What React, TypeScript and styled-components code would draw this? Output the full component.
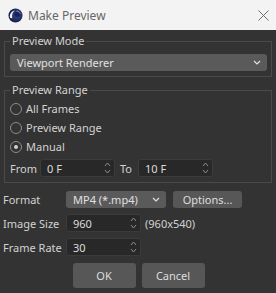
import React from "react"
import styled, { createGlobalStyle } from "styled-components"

const GlobalStyle = createGlobalStyle`
  html, body {
    margin: 0;
    padding: 0;
    background: #333333;
  }
  * {
    box-sizing: border-box;
  }
`

const Window = styled.div`
  width: 276px;
  height: 293px;
  display: flex;
  flex-direction: column;
  background: #333333;
  font-family: "Noto Sans", "Open Sans", sans-serif;
  font-size: 11px;
  color: #d2d2d2;
  overflow: hidden;
`

const TitleBar = styled.div`
  height: 30px;
  flex: none;
  display: flex;
  align-items: center;
  padding: 0 7px 0 8px;
  background: #f3f3f3;
`

const Title = styled.span`
  margin-left: 5px;
  font-size: 12px;
  color: #666666;
`

const Close = styled.span`
  margin-left: auto;
  display: flex;
`

const Body = styled.div`
  display: flex;
  flex-direction: column;
  padding: 0 4px 0 3px;
`

const Group = styled.fieldset<{ $top: number; $pad: number }>`
  margin: ${(p) => p.$top}px 0 0 1px;
  padding: ${(p) => p.$pad}px 4px 5px 5px;
  border: 1px solid #4a4a4a;
  min-width: 0;
`

const Legend = styled.legend`
  padding: 0 2px;
  line-height: 14px;
  color: #d2d2d2;
`

const Select = styled.div<{ $width?: number }>`
  height: 17px;
  width: ${(p) => (p.$width ? `${p.$width}px` : "100%")};
  display: flex;
  align-items: center;
  padding: 0 6px 0 7px;
  background: #5a5a5a;
  border-radius: 3px;
  color: #e0e0e0;
  span {
    flex: 1;
  }
`

const RadioRow = styled.div`
  height: 19px;
  display: flex;
  align-items: center;
  gap: 4px;
`

const RadioCircle = styled.span<{ $on?: boolean }>`
  width: 12px;
  height: 12px;
  border-radius: 50%;
  border: 1px solid #8c8c8c;
  display: flex;
  align-items: center;
  justify-content: center;
  &::after {
    content: "";
    width: 4px;
    height: 4px;
    border-radius: 50%;
    background: ${(p) => (p.$on ? "#d0d0d0" : "transparent")};
  }
`

const RangeRow = styled.div`
  margin-top: 3px;
  height: 18px;
  display: flex;
  align-items: center;
`

const RangeLabel = styled.span<{ $w: number; $pad: number }>`
  width: ${(p) => p.$w}px;
  padding-left: ${(p) => p.$pad}px;
`

const Input = styled.div<{ $width: number }>`
  width: ${(p) => p.$width}px;
  height: 18px;
  display: flex;
  align-items: center;
  padding: 0 3px 0 6px;
  background: #282828;
  border: 1px solid #3b3b3b;
  border-radius: 3px;
  color: #dcdcdc;
  span {
    flex: 1;
  }
`

const Form = styled.div`
  margin-top: 7px;
  display: grid;
  grid-template-columns: 63px auto;
  grid-auto-rows: 18px;
  row-gap: 6px;
  align-items: center;
`

const FieldLine = styled.div`
  display: flex;
  align-items: center;
  gap: 7px;
`

const Note = styled.span`
  margin-left: -3px;
`

const Button = styled.div<{ $width: number; $height: number }>`
  width: ${(p) => p.$width}px;
  height: ${(p) => p.$height}px;
  display: flex;
  align-items: center;
  justify-content: center;
  background: #575757;
  border-radius: 3px;
  color: #dedede;
`

const Buttons = styled.div`
  margin-top: 7px;
  display: flex;
  justify-content: center;
  gap: 6px;
  padding-left: 2px;
`

const Logo = () => (
  <svg width="15" height="15" viewBox="0 0 16 16">
    <defs>
      <radialGradient id="sph" cx="0.6" cy="0.45" r="0.6">
        <stop offset="0" stopColor="#3b4d9a" />
        <stop offset="1" stopColor="#141a3c" />
      </radialGradient>
    </defs>
    <circle cx="8" cy="8" r="7.5" fill="url(#sph)" />
    <path d="M2.2 10.5 C1.2 6.5 4 3 7.5 2.6 C5 4.2 3.8 7 4.6 10.8 C3.8 11 3 10.9 2.2 10.5 Z" fill="#eef1ff" />
    <ellipse cx="9.8" cy="6.8" rx="3" ry="2.6" fill="#1a2250" />
    <path d="M9 3.2 C11 3.2 12.6 4.4 13 6" stroke="#8ea2ee" strokeWidth="1" fill="none" />
  </svg>
)

const CloseIcon = () => (
  <svg width="11" height="11" viewBox="0 0 11 11">
    <path d="M0.5 0.5 L10.5 10.5 M10.5 0.5 L0.5 10.5" stroke="#6e6e6e" strokeWidth="1" />
  </svg>
)

const Chevron = () => (
  <svg width="8" height="5" viewBox="0 0 8 5">
    <path d="M1 1 L4 4 L7 1" stroke="#e0e0e0" strokeWidth="1.2" fill="none" />
  </svg>
)

const Spin = () => (
  <svg width="7" height="14" viewBox="0 0 7 14">
    <path d="M1 5 L3.5 2 L6 5 M1 9 L3.5 12 L6 9" stroke="#8e8e8e" strokeWidth="1" fill="none" />
  </svg>
)

const Radio = ({ label, on }: { label: string; on?: boolean }) => (
  <RadioRow>
    <RadioCircle $on={on} />
    {label}
  </RadioRow>
)

const NumberBox = ({ value, width }: { value: string; width: number }) => (
  <Input $width={width}>
    <span>{value}</span>
    <Spin />
  </Input>
)

function App() {
  return (
    <>
      <GlobalStyle />
      <Window>
        <TitleBar>
          <Logo />
          <Title>Make Preview</Title>
          <Close>
            <CloseIcon />
          </Close>
        </TitleBar>

        <Body>
          <Group $top={4} $pad={6}>
            <Legend>Preview Mode</Legend>
            <Select>
              <span>Viewport Renderer</span>
              <Chevron />
            </Select>
          </Group>

          <Group $top={6} $pad={2}>
            <Legend>Preview Range</Legend>
            <Radio label="All Frames" />
            <Radio label="Preview Range" />
            <Radio label="Manual" on />
            <RangeRow>
              <RangeLabel $w={30} $pad={0}>From</RangeLabel>
              <NumberBox value="0 F" width={75} />
              <RangeLabel $w={23} $pad={5}>To</RangeLabel>
              <NumberBox value="10 F" width={75} />
            </RangeRow>
          </Group>

          <Form>
            <span>Format</span>
            <FieldLine>
              <Select $width={100}>
                <span>MP4 (*.mp4)</span>
                <Chevron />
              </Select>
              <Button $width={69} $height={17}>Options...</Button>
            </FieldLine>

            <span>Image Size</span>
            <FieldLine>
              <NumberBox value="960" width={75} />
              <Note>(960x540)</Note>
            </FieldLine>

            <span>Frame Rate</span>
            <FieldLine>
              <NumberBox value="30" width={75} />
            </FieldLine>
          </Form>

          <Buttons>
            <Button $width={63} $height={25}>OK</Button>
            <Button $width={63} $height={25}>Cancel</Button>
          </Buttons>
        </Body>
      </Window>
    </>
  )
}

export default App
